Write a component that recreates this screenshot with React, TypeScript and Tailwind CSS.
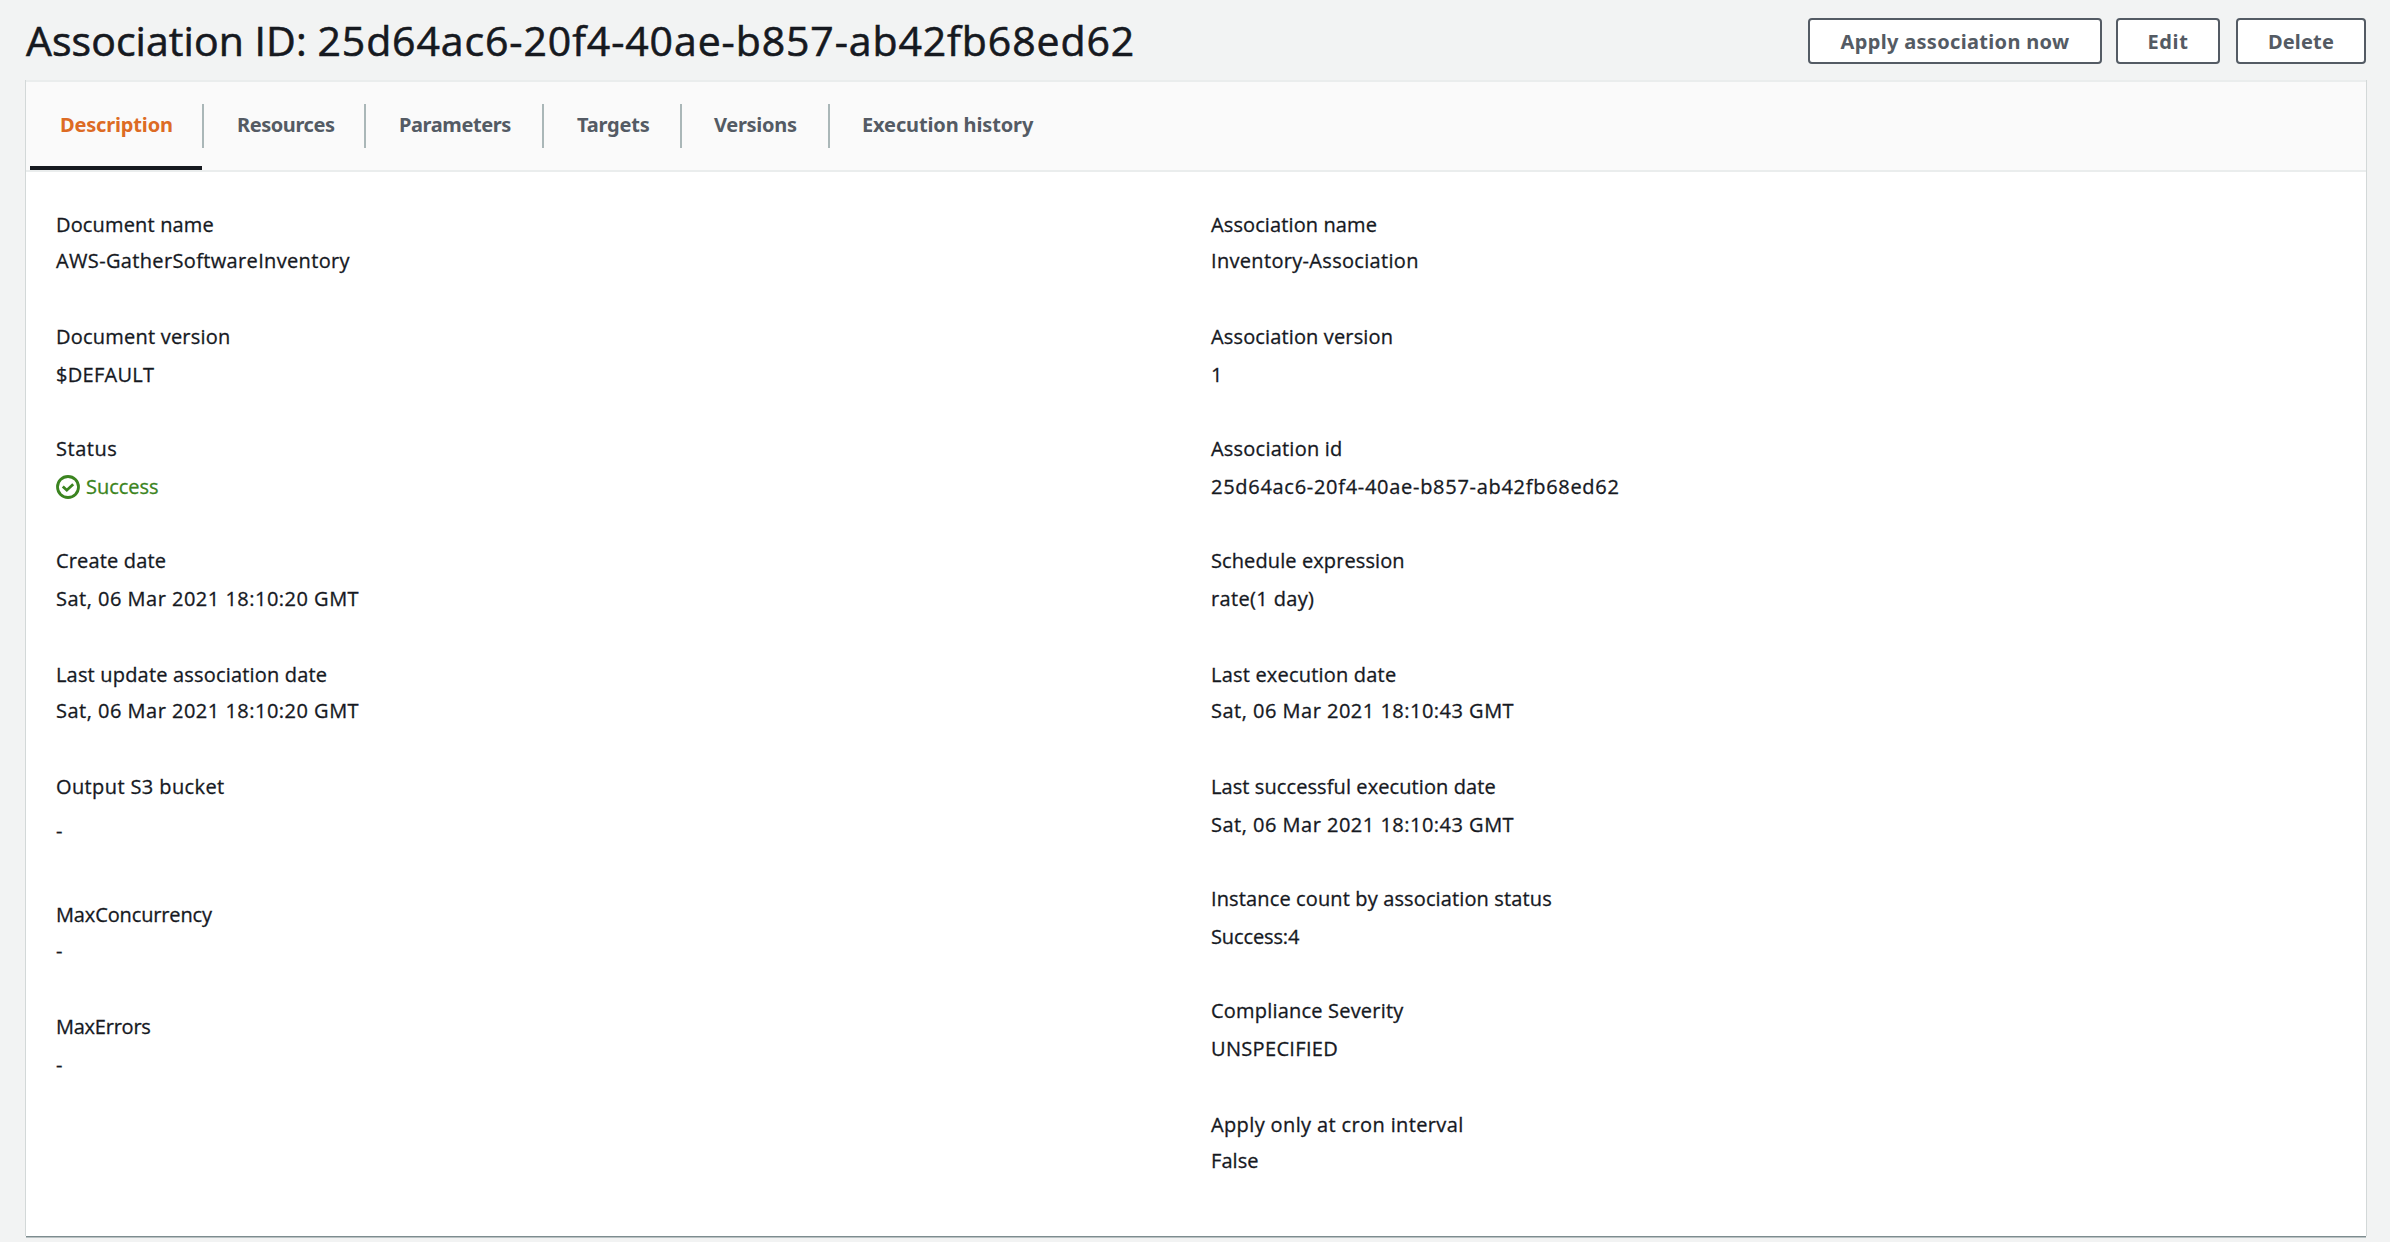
type Item = {
  label: string;
  value: string;
  labelTracking: string;
  valueTracking: string;
  row: string;
  gap: string;
  status?: boolean;
};

const tabs = [
  { name: "Description", box: "w-[172px] pl-[30px]", tracking: "tracking-[-0.17px]", active: true },
  { name: "Resources", box: "w-[160px] pl-[33px]", tracking: "tracking-[-0.44px]" },
  { name: "Parameters", box: "w-[176px] pl-[33px]", tracking: "tracking-[-0.4px]" },
  { name: "Targets", box: "w-[136px] pl-[33px]", tracking: "tracking-[-0.2px]" },
  { name: "Versions", box: "w-[146px] pl-8", tracking: "tracking-[-0.29px]" },
  { name: "Execution history", box: "w-[236px] pl-8", tracking: "tracking-[-0.14px]" },
];

const leftItems: Item[] = [
  { label: "Document name", value: "AWS-GatherSoftwareInventory", labelTracking: "tracking-[0.16px]", valueTracking: "tracking-[0.35px]", row: "h-28", gap: "" },
  { label: "Document version", value: "$DEFAULT", labelTracking: "tracking-[0.22px]", valueTracking: "tracking-[0.28px]", row: "h-28", gap: "mt-0.5" },
  { label: "Status", value: "Success", labelTracking: "tracking-[0.54px]", valueTracking: "tracking-[-0.03px]", row: "h-28", gap: "mt-0.5", status: true },
  { label: "Create date", value: "Sat, 06 Mar 2021 18:10:20 GMT", labelTracking: "tracking-[0.16px]", valueTracking: "tracking-[0.49px]", row: "h-[114px]", gap: "mt-0.5" },
  { label: "Last update association date", value: "Sat, 06 Mar 2021 18:10:20 GMT", labelTracking: "tracking-[0.18px]", valueTracking: "tracking-[0.49px]", row: "h-28", gap: "" },
  { label: "Output S3 bucket", value: "-", labelTracking: "tracking-[0.39px]", valueTracking: "tracking-normal", row: "h-32", gap: "mt-2" },
  { label: "MaxConcurrency", value: "-", labelTracking: "tracking-[-0.13px]", valueTracking: "tracking-normal", row: "h-28", gap: "" },
  { label: "MaxErrors", value: "-", labelTracking: "tracking-[-0.24px]", valueTracking: "tracking-normal", row: "h-28", gap: "mt-0.5" },
];

const rightItems: Item[] = [
  { label: "Association name", value: "Inventory-Association", labelTracking: "tracking-[0.11px]", valueTracking: "tracking-[0.32px]", row: "h-28", gap: "" },
  { label: "Association version", value: "1", labelTracking: "tracking-[0.14px]", valueTracking: "tracking-normal", row: "h-28", gap: "mt-0.5" },
  { label: "Association id", value: "25d64ac6-20f4-40ae-b857-ab42fb68ed62", labelTracking: "tracking-[0.22px]", valueTracking: "tracking-[0.71px]", row: "h-28", gap: "mt-0.5" },
  { label: "Schedule expression", value: "rate(1 day)", labelTracking: "tracking-[0.1px]", valueTracking: "tracking-[0.35px]", row: "h-[114px]", gap: "mt-0.5" },
  { label: "Last execution date", value: "Sat, 06 Mar 2021 18:10:43 GMT", labelTracking: "tracking-[0.2px]", valueTracking: "tracking-[0.49px]", row: "h-28", gap: "" },
  { label: "Last successful execution date", value: "Sat, 06 Mar 2021 18:10:43 GMT", labelTracking: "tracking-[0.09px]", valueTracking: "tracking-[0.49px]", row: "h-28", gap: "mt-0.5" },
  { label: "Instance count by association status", value: "Success:4", labelTracking: "tracking-[0.13px]", valueTracking: "tracking-[-0.12px]", row: "h-28", gap: "mt-0.5" },
  { label: "Compliance Severity", value: "UNSPECIFIED", labelTracking: "tracking-[0.2px]", valueTracking: "tracking-[0.33px]", row: "h-[114px]", gap: "mt-0.5" },
  { label: "Apply only at cron interval", value: "False", labelTracking: "tracking-[0.37px]", valueTracking: "tracking-[0.07px]", row: "h-28", gap: "" },
];

function SuccessIcon() {
  return (
    <svg viewBox="0 0 24 24" className="mr-1.5 h-6 w-6 shrink-0" fill="none" stroke="currentColor" strokeWidth="2.8">
      <circle cx="12" cy="12" r="10.5" />
      <path d="M6.8 11.4l4 3.8 6.4-6" />
    </svg>
  );
}

function Field({ item }: { item: Item }) {
  return (
    <div className={item.row}>
      <dt className={`h-9 leading-[35px] whitespace-nowrap ${item.labelTracking}`}>{item.label}</dt>
      <dd className={`flex h-9 leading-[35px] whitespace-nowrap ${item.gap} ${item.valueTracking} ${item.status ? "text-[#3b8420]" : ""}`}>
        {item.status && (
          <span className="flex items-center">
            <SuccessIcon />
          </span>
        )}
        {item.value}
      </dd>
    </div>
  );
}

function Button({ children, box }: { children: string; box: string }) {
  return (
    <button className={`h-[46px] rounded-[4px] border-2 border-[#545b64] bg-white text-center font-['Noto_Sans',sans-serif] leading-[41px] font-bold whitespace-nowrap text-[#545b64] ${box}`}>
      {children}
    </button>
  );
}

export default function App() {
  return (
    <div className="h-[1242px] w-[2390px] overflow-hidden bg-[#f2f3f3] pr-6 pl-[26px] font-['Open_Sans',sans-serif] text-[20px] text-[#16191f]">
      <header className="flex h-20 justify-between">
        <h1 className="pt-3 text-[41px] leading-[56px] tracking-[0.06px] whitespace-nowrap [-webkit-text-stroke:0.6px_#16191f]">
          Association ID: <span className="tracking-[0.9px]">25d64ac6-20f4-40ae-b857-ab42fb68ed62</span>
        </h1>
        <div className="flex pt-[18px]">
          <Button box="mr-3.5 w-[294px] tracking-[0.32px]">Apply association now</Button>
          <Button box="mr-4 w-[104px] tracking-[0.59px]">Edit</Button>
          <Button box="w-[130px] tracking-[0.17px]">Delete</Button>
        </div>
      </header>

      <main className="h-[1156px] bg-white shadow-[0_1px_0_#7d8c8f,0_2px_0_#bac2c3,-1px_0_0_#d3d8d8,1px_0_0_#d3d8d8]">
        <nav className="flex h-[92px] border-y-2 border-[#eaeded] bg-[#fafafa] pl-1 font-['Noto_Sans',sans-serif]">
          {tabs.map((tab, i) => (
            <div key={tab.name} className="flex">
              {i > 0 && <span className="mt-[22px] h-11 w-0.5 bg-[#aab7b8]" />}
              <a
                className={`h-[88px] leading-[85px] font-bold whitespace-nowrap ${tab.box} ${tab.tracking} ${
                  tab.active ? "border-b-4 border-[#16191f] text-[#dd6b24]" : "text-[#545b64]"
                }`}
              >
                {tab.name}
              </a>
            </div>
          ))}
        </nav>
        <div className="flex pt-[35px] pl-[30px] [-webkit-text-stroke:0.3px]">
          <dl className="w-[1155px]">
            {leftItems.map((item) => (
              <Field key={item.label} item={item} />
            ))}
          </dl>
          <dl>
            {rightItems.map((item) => (
              <Field key={item.label} item={item} />
            ))}
          </dl>
        </div>
      </main>
    </div>
  );
}
